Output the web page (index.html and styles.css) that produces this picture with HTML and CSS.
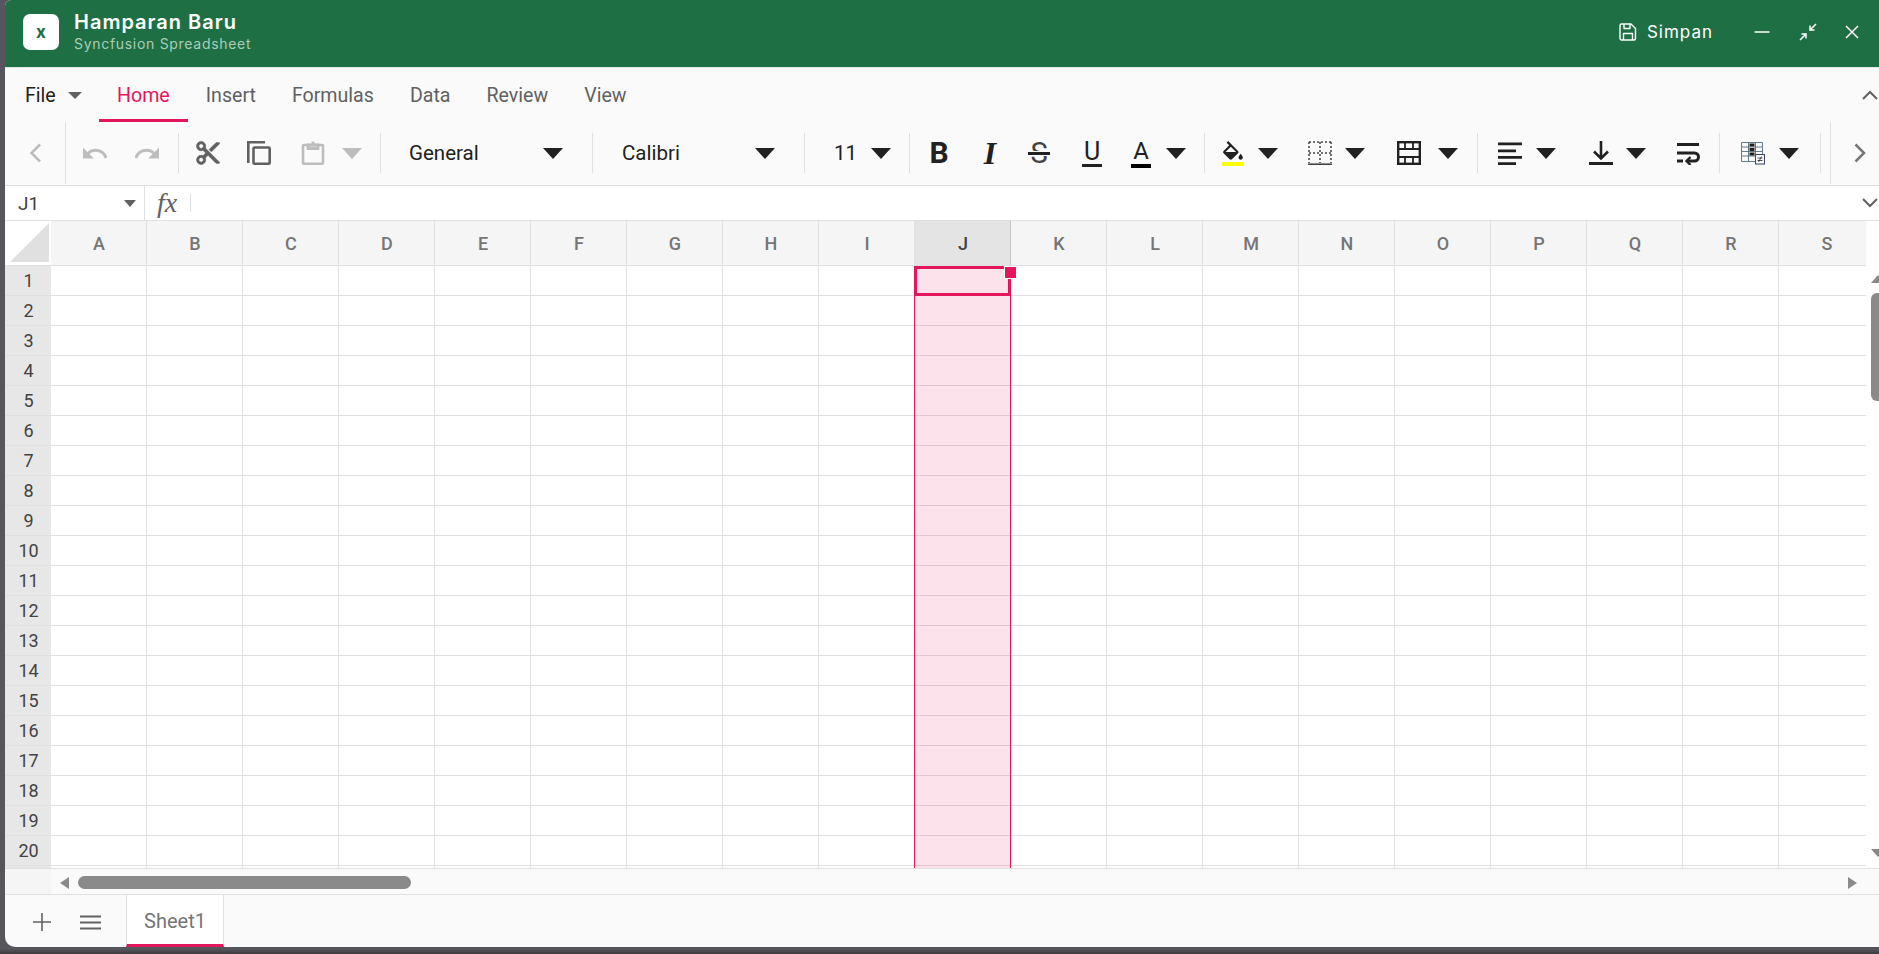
FILE: index.html
```html
<!DOCTYPE html>
<html lang="en">
<head>
    <meta charset="UTF-8">
    <meta name="viewport" content="width=device-width, initial-scale=1.0">
    <title>Hamparan Baru</title>
    <link rel="stylesheet" href="styles.css">
</head>
<body>
    <div class="app">
        <header class="titlebar">
            <div class="logo">x</div>
            <div class="doc-name">
                <div class="doc-title">Hamparan Baru</div>
                <div class="doc-sub">Syncfusion Spreadsheet</div>
            </div>
            <div class="save">
                <svg width="18" height="18" viewBox="0 0 18 18" fill="none" stroke="#fff" stroke-width="1.4" stroke-linejoin="round"><path d="M2.5 1h9.5l4.5 4.5v10a1.5 1.5 0 0 1-1.5 1.5H2.500A1.500 1.500 0 0 1 1 15.500V2.500A1.500 1.500 0 0 1 2.500 1z"/><path d="M5 1v4.500h6V1M4.500 17v-6.500h9V17"/></svg>
                <span>Simpan</span>
            </div>
            <div class="win-btns">
                <svg width="18" height="18" viewBox="0 0 18 18" stroke="#fff" stroke-width="1.500" fill="none"><path d="M1.500 9h15"/></svg>
                <svg width="18" height="18" viewBox="0 0 18 18" stroke="#fff" stroke-width="1.500" fill="none"><path d="M17 1l-6 6M11 2.500V7h4.500M1 17l6-6M2.500 11H7v4.500"/></svg>
                <svg width="14" height="14" viewBox="0 0 14 14" stroke="#fff" stroke-width="1.500" fill="none"><path d="M1 1l12 12M13 1L1 13"/></svg>
            </div>
        </header>

        <nav class="tabs">
            <div class="file-tab">File <i class="caret caret-sm caret-grey"></i></div>
            <div class="tab active">Home</div>
            <div class="tab">Insert</div>
            <div class="tab">Formulas</div>
            <div class="tab">Data</div>
            <div class="tab">Review</div>
            <div class="tab">View</div>
            <svg class="collapse" width="16" height="10" viewBox="0 0 16 10" fill="none" stroke="#616161" stroke-width="2"><path d="M1 9l7-7 7 7"/></svg>
        </nav>

        <div class="toolbar">
            <div class="nav-left">
                <svg width="12" height="20" viewBox="0 0 12 20" fill="none" stroke="#bdbdbd" stroke-width="2.500"><path d="M11 1.500L2.500 10l8.500 8.500"/></svg>
            </div>
            <div class="group g-undo">
                <svg class="ico" viewBox="2 1.500 20 20" fill="#bdbdbd"><path d="M12.500 8c-2.650 0-5.050.99-6.900 2.600L2 7v9h9l-3.620-3.620c1.390-1.160 3.160-1.880 5.120-1.880 3.540 0 6.550 2.310 7.600 5.500l2.370-.78C21.080 11.030 17.150 8 12.500 8z"/></svg>
                <svg class="ico" viewBox="2 1.500 20 20" fill="#bdbdbd"><path d="M18.400 10.600C16.550 8.990 14.150 8 11.500 8c-4.650 0-8.580 3.030-9.960 7.220L3.900 16c1.050-3.190 4.050-5.500 7.600-5.500 1.950 0 3.730.72 5.120 1.880L13 16h9V7l-3.600 3.600z"/></svg>
            </div>
            <div class="group g-clip">
                <svg class="ico" viewBox="1.500 1.500 21 21" fill="#616161" stroke="#616161" stroke-width=".6"><path d="M9.640 7.640c.23-.5.36-1.050.36-1.640 0-2.210-1.790-4-4-4S2 3.790 2 6s1.790 4 4 4c.59 0 1.140-.13 1.640-.36L10 12l-2.360 2.360C7.140 14.130 6.590 14 6 14c-2.210 0-4 1.790-4 4s1.790 4 4 4 4-1.790 4-4c0-.59-.13-1.140-.36-1.640L12 14l7 7h3v-1L9.640 7.640zM6 8c-1.100 0-2-.89-2-2s.9-2 2-2 2 .89 2 2-.9 2-2 2zm0 12c-1.100 0-2-.89-2-2s.9-2 2-2 2 .89 2 2-.9 2-2 2zM19 3l-6 6 2 2 7-7V3h-3z"/></svg>
                <svg class="ico" viewBox="0 0 24 24" fill="none" stroke="#616161" stroke-width="2.600"><path d="M1.300 22V1.300H18"/><rect x="6.500" y="6.500" width="16.200" height="16.200" rx="1"/></svg>
                <svg class="ico" viewBox="0 0 24 24" fill="none" stroke="#bdbdbd" stroke-width="2.600"><rect x="2" y="4" width="20" height="18.700" rx="1"/><path d="M7 4h10v3.500H7zM12 .5v3" stroke-width="2.800"/></svg>
                <i class="caret caret-off"></i>
            </div>
            <div class="group g-general">
                <span class="combo">General</span>
                <i class="caret"></i>
            </div>
            <div class="group g-font">
                <span class="combo">Calibri</span>
                <i class="caret"></i>
            </div>
            <div class="group g-size">
                <span class="combo">11</span>
                <i class="caret"></i>
            </div>
            <div class="group g-style">
                <span class="fmt fmt-b">B</span>
                <span class="fmt fmt-i">I</span>
                <span class="fmt fmt-s">S</span>
                <span class="fmt fmt-u">U</span>
                <span class="fmt fmt-a">A</span>
                <i class="caret"></i>
            </div>
            <div class="group g-color">
                <span class="fill-ico">
                    <svg width="22" height="20" viewBox="2 0 20 18" fill="#212121"><path d="M16.560 8.940L7.620 0 6.210 1.410l2.380 2.380-5.150 5.150c-.59.59-.59 1.540 0 2.120l5.500 5.500c.29.29.68.44 1.060.44s.77-.15 1.060-.44l5.500-5.500c.59-.58.59-1.530 0-2.120zM5.210 10L10 5.210 14.790 10H5.210zM19 11.500s-2 2.170-2 3.500c0 1.100.9 2 2 2s2-.9 2-2c0-1.330-2-3.500-2-3.500z"/></svg>
                </span>
                <i class="caret"></i>
                <svg class="ico" viewBox="0 0 24 24" fill="none" stroke="#424242" stroke-width="1.500"><path d="M1 1h22M1 12h22M1 1v21M23 1v21M12 1v21" stroke-dasharray="2 2"/><path d="M0 23.200h24" stroke-width="1.600"/></svg>
                <i class="caret"></i>
                <svg class="ico" viewBox="0 0 24 24" fill="none" stroke="#212121" stroke-width="2.400"><rect x="1.200" y="1.200" width="21.600" height="21.600"/><path d="M1 8h22M1 16h22M8 1v7M16 1v7M8 16v7M16 16v7" stroke-width="1.800"/></svg>
                <i class="caret"></i>
            </div>
            <div class="group g-align">
                <svg class="ico" viewBox="0 0 24 24" fill="#212121"><path d="M0 1.500h24v2.800H0zM0 8.500h18v2.800H0zM0 15h24v2.800H0zM0 21.200h18V24H0z"/></svg>
                <i class="caret"></i>
                <svg class="ico" viewBox="0 0 24 24" fill="none" stroke="#212121" stroke-width="2.600"><path d="M12 0v17.500M5 10.500l7 7 7-7"/><path d="M0 22.500h24" stroke-width="3"/></svg>
                <i class="caret"></i>
                <svg class="ico" viewBox="0 0 24 24" fill="none" stroke="#212121"><path d="M1 3.500h22" stroke-width="3"/><path d="M1 12h17.500a4 4 0 0 1 0 8H11" stroke-width="3"/><path d="M1 20h6" stroke-width="3"/><path d="M14.500 16l-4 4 4 4" stroke-width="2.400"/></svg>
            </div>
            <div class="group g-cf">
                <svg class="ico" viewBox="0 0 24 24" fill="none">
                    <path d="M.5 1.500h21v19H.5zM.5 6h21M.5 10.500h21M.5 15h21M7.500 1.500v19M14.500 1.500v19" stroke="#546e7a" stroke-width=".9"/>
                    <path d="M8.500 2.500h5v3h-5zM8.500 7h5v3h-5zM8.500 11.500h5v3h-5z" fill="#212121"/>
                    <rect x="14.500" y="13.500" width="9" height="9.500" fill="#fff" stroke="#3f4a6b" stroke-width="1.100"/>
                    <path d="M16.500 17h5M16.500 19.500h5M20.500 15.500l-3 5.500" stroke="#212121" stroke-width=".8"/>
                </svg>
                <i class="caret"></i>
            </div>
            <div class="nav-gap"></div>
            <div class="nav-right">
                <svg width="12" height="20" viewBox="0 0 12 20" fill="none" stroke="#757575" stroke-width="2.500"><path d="M1.500 1.500L10 10l-8.500 8.500"/></svg>
            </div>
        </div>

        <div class="formula-bar">
            <div class="name-box">
                <span>J1</span>
                <i class="caret caret-xs caret-grey"></i>
            </div>
            <div class="fx">fx</div>
            <div class="fx-sep"></div>
            <svg class="fx-expand" width="16" height="10" viewBox="0 0 16 10" fill="none" stroke="#616161" stroke-width="2"><path d="M1 1l7 7 7-7"/></svg>
        </div>

        <div class="sheet-wrap">
            <div class="sheet" id="sheet">
                <div class="col-sel"></div>
                <div class="active-cell"></div>
                <div class="fill-handle"></div>
            </div>
            <div class="vscroll">
                <i class="v-up"></i>
                <div class="v-thumb"></div>
                <i class="v-down"></i>
            </div>
        </div>

        <div class="hscroll">
            <div class="hscroll-corner"></div>
            <i class="h-left"></i>
            <div class="h-thumb"></div>
            <i class="h-right"></i>
        </div>

        <div class="sheet-tabs">
            <svg class="add-sheet" width="18" height="18" viewBox="0 0 18 18" stroke="#616161" stroke-width="1.600"><path d="M9 0v18M0 9h18"/></svg>
            <svg class="list-sheet" width="21" height="15" viewBox="0 0 21 15" stroke="#616161" stroke-width="2"><path d="M0 1.500h21M0 7.500h21M0 13.500h21"/></svg>
            <div class="sheet-tab">Sheet1</div>
        </div>
    </div>

    <script>
        // Build the header row and the grid cells
        const sheet = document.getElementById('sheet');
        const letters = 'ABCDEFGHIJKLMNOPQRS'.split('');
        const parts = ['<div class="corner"><div class="corner-tri"></div></div>'];
        letters.forEach(function (l) {
            parts.push('<div class="col-head' + (l === 'J' ? ' picked' : '') + '">' + l + '</div>');
        });
        for (let r = 1; r <= 21; r++) {
            parts.push('<div class="row-head">' + (r < 21 ? r : '') + '</div>');
            letters.forEach(function () {
                parts.push('<div class="cell"></div>');
            });
        }
        sheet.insertAdjacentHTML('afterbegin', parts.join(''));
    </script>
</body>
</html>
```

FILE: styles.css
```css
* {
    box-sizing: border-box;
}

html, body {
    height: 100%;
}

body {
    margin: 0;
    background: linear-gradient(#56565c 0, #56565c 949px, #3a3a3e 100%);
    overflow: hidden;
    font-family: 'Roboto', sans-serif;
}

.app {
    margin-left: 5px;
    height: 947px;
    display: flex;
    flex-direction: column;
    background: #fafafa;
    border-radius: 6px 0 0 10px;
    overflow: hidden;
}

/* title bar */
.titlebar {
    height: 68px;
    flex-shrink: 0;
    display: flex;
    align-items: center;
    background: #1e6f43;
    border-bottom: 1px solid #e4e4e4;
    padding: 0 20px 4px 18px;
    color: #fff;
}

.logo {
    width: 36px;
    height: 36px;
    border-radius: 7px;
    background: #fff;
    color: #1e6f43;
    font-family: 'Inter', sans-serif;
    font-weight: 700;
    font-size: 17px;
    display: flex;
    justify-content: center;
    align-items: center;
}

.doc-name {
    margin-left: 15px;
    flex: 1;
}

.doc-title {
    font-family: 'Inter', sans-serif;
    font-weight: 600;
    font-size: 20px;
    letter-spacing: 1px;
    line-height: 24px;
}

.doc-sub {
    font-family: 'Inter', sans-serif;
    font-size: 14px;
    letter-spacing: 0.7px;
    line-height: 18px;
    margin-top: 1px;
    color: #a9cdb9;
}

.save {
    display: flex;
    align-items: center;
    gap: 10px;
    font-family: 'Inter', sans-serif;
    font-size: 17px;
    letter-spacing: 1px;
}

.win-btns {
    display: flex;
    align-items: center;
    margin-left: 40px;
    gap: 28px;
}

/* ribbon tabs */
.tabs {
    height: 54px;
    flex-shrink: 0;
    display: flex;
    align-items: stretch;
    font-size: 19.6px;
    color: #616161;
    padding-left: 20px;
    position: relative;
}

.file-tab {
    color: #212121;
    display: flex;
    align-items: center;
    gap: 12px;
    width: 74px;
}

.tab {
    display: flex;
    align-items: center;
    padding: 3px 18px 0;
    border-bottom: 3px solid transparent;
}

.tab.active {
    color: #e3165b;
    border-bottom-color: #e3165b;
}

.collapse {
    margin: 22px 1px 0 auto;
}

.caret {
    display: block;
    width: 0;
    height: 0;
    border-left: 10px solid transparent;
    border-right: 10px solid transparent;
    border-top: 11px solid #212121;
}

.caret-sm {
    border-left-width: 7px;
    border-right-width: 7px;
    border-top-width: 7px;
}

.caret-xs {
    border-left-width: 6px;
    border-right-width: 6px;
    border-top-width: 7px;
}

.caret-grey {
    border-top-color: #616161;
}

.caret-off {
    border-top-color: #bdbdbd;
}

/* toolbar */
.toolbar {
    height: 64px;
    flex-shrink: 0;
    display: flex;
    align-items: center;
    border-bottom: 1px solid #e0e0e0;
    padding-bottom: 1px;
}

.nav-left {
    width: 61px;
    height: 100%;
    border-right: 1px solid #e0e0e0;
    display: flex;
    align-items: center;
    padding-left: 24px;
}

.nav-gap {
    width: 9px;
}

.nav-right {
    flex: 1;
    height: 100%;
    border-left: 1px solid #e0e0e0;
    display: flex;
    align-items: center;
    padding-left: 23px;
}

.group {
    height: 40px;
    display: grid;
    align-items: center;
    justify-items: start;
    border-right: 1px solid #e0e0e0;
}

.g-undo {
    width: 113px;
    padding-left: 17px;
    grid-template-columns: 52px 24px;
}

.g-clip {
    width: 202px;
    padding-left: 17px;
    grid-template-columns: 51px 54px 41px 20px;
}

.g-general {
    width: 212px;
    padding-left: 28px;
    grid-template-columns: 134px 20px;
}

.g-font {
    width: 212px;
    padding-left: 29px;
    grid-template-columns: 133px 20px;
}

.g-size {
    width: 105px;
    padding-left: 29px;
    grid-template-columns: 37px 20px;
}

.g-style {
    width: 295px;
    padding-left: 19px;
    grid-template-columns: 51px 49px 53px 49px 35px 20px;
}

.g-color {
    width: 273px;
    padding-left: 17px;
    grid-template-columns: 36px 50px 37px 52px 41px 20px;
}

.g-align {
    width: 242px;
    padding-left: 20px;
    grid-template-columns: 38px 53px 37px 50px 24px;
}

.g-cf {
    width: 101px;
    padding-left: 21px;
    grid-template-columns: 38px 20px;
}

.ico {
    display: block;
    width: 24px;
    height: 24px;
}

.combo {
    font-size: 20.5px;
    color: #212121;
}

.fmt {
    display: block;
    width: 20px;
    text-align: center;
    font-size: 25px;
    line-height: 28px;
    color: #212121;
}

.fmt-b {
    font-weight: 700;
    font-size: 30px;
}

.fmt-i {
    font-family: 'Liberation Serif', serif;
    font-style: italic;
    font-weight: 700;
    font-size: 32px;
}

.fmt-s {
    position: relative;
    color: #424242;
    font-size: 29px;
}

.fmt-s::after {
    content: "";
    position: absolute;
    left: -1px;
    right: -1px;
    top: 13px;
    height: 3px;
    background: #212121;
    box-shadow: 0 0 0 1px #fafafa;
}

.fmt-u {
    border-bottom: 3px solid #212121;
    line-height: 25px;
}

.fmt-a {
    border-bottom: 4px solid #000;
    line-height: 25px;
    font-size: 24px;
}

.fill-ico {
    display: block;
    width: 22px;
    height: 25px;
    border-bottom: 4px solid #ffff00;
}

.fill-ico svg {
    display: block;
}

/* formula bar */
.formula-bar {
    height: 35px;
    flex-shrink: 0;
    display: flex;
    align-items: center;
    background: #fff;
    border-bottom: 1px solid #e0e0e0;
}

.name-box {
    width: 140px;
    height: 100%;
    border-right: 1px solid #e0e0e0;
    display: flex;
    align-items: center;
    justify-content: space-between;
    padding: 0 8px 0 13px;
    font-size: 19px;
    color: #424242;
}

.fx {
    width: 45px;
    padding-left: 12px;
    font-family: 'Liberation Serif', serif;
    font-style: italic;
    font-size: 28px;
    line-height: 30px;
    color: #616161;
}

.fx-sep {
    width: 1px;
    height: 18px;
    background: #e0e0e0;
}

.fx-expand {
    margin-left: auto;
    margin-right: 1px;
}

/* grid */
.sheet-wrap {
    height: 647px;
    flex-shrink: 0;
    display: flex;
    background: #fff;
}

.sheet {
    width: 1861px;
    flex-shrink: 0;
    height: 100%;
    overflow: hidden;
    position: relative;
    display: grid;
    grid-template-columns: 46px repeat(19, 96px);
    grid-template-rows: 45px repeat(21, 30px);
}

.corner {
    background: #fff;
    border-bottom: 1px solid #e0e0e0;
    padding: 2px 2px 3px 5px;
}

.corner-tri {
    width: 100%;
    height: 100%;
    background: #e0e0e0;
    clip-path: polygon(100% 0, 100% 100%, 0 100%);
}

.col-head {
    background: #f5f5f5;
    border-right: 1px solid #e0e0e0;
    border-bottom: 1px solid #e0e0e0;
    display: flex;
    justify-content: center;
    align-items: center;
    font-size: 18px;
    font-weight: 500;
    color: #757575;
    padding-left: 1px;
}

.col-head.picked {
    background: #e4e4e4;
    color: #424242;
    border-right-color: #c8c8c8;
}

.row-head {
    background: #e7e7e7;
    border-bottom: 1px solid #e0e0e0;
    display: flex;
    justify-content: center;
    align-items: center;
    font-size: 18px;
    color: #424242;
    padding-left: 1px;
}

.cell {
    background: #fff;
    border-right: 1px solid #e0e0e0;
    border-bottom: 1px solid #e0e0e0;
}

.col-sel {
    position: absolute;
    left: 909px;
    top: 45px;
    bottom: 0;
    width: 97px;
    background: rgba(227, 22, 91, 0.12);
    border-left: 1px solid #e3165b;
    border-right: 1px solid #e3165b;
    z-index: 1;
}

.active-cell {
    position: absolute;
    left: 909px;
    top: 45px;
    width: 97px;
    height: 30px;
    border: 3px solid #e3165b;
    z-index: 2;
}

.fill-handle {
    position: absolute;
    left: 1000px;
    top: 46px;
    width: 11px;
    height: 11px;
    background: #e3165b;
    box-shadow: 0 0 0 1px #fff;
    z-index: 3;
}

.vscroll {
    flex: 1;
    overflow: hidden;
    background: #fff;
    padding: 54px 0 0 5px;
    display: flex;
    flex-direction: column;
}

.v-up, .v-down {
    display: block;
    width: 0;
    height: 0;
    border-left: 7px solid transparent;
    border-right: 7px solid transparent;
}

.v-up {
    border-bottom: 8px solid #8a8a8a;
}

.v-down {
    border-top: 8px solid #8a8a8a;
    margin-top: 448px;
}

.v-thumb {
    width: 16px;
    height: 108px;
    margin-top: 10px;
    border-radius: 6px;
    background: #8a8a8a;
    flex-shrink: 0;
}

/* horizontal scroller */
.hscroll {
    height: 27px;
    flex-shrink: 0;
    display: flex;
    align-items: center;
    border-top: 1px solid #e0e0e0;
    border-bottom: 1px solid #e0e0e0;
}

.hscroll-corner {
    width: 46px;
    height: 100%;
    background: #f5f5f5;
}

.h-left, .h-right {
    display: block;
    width: 0;
    height: 0;
    margin-top: 2px;
    border-top: 6px solid transparent;
    border-bottom: 6px solid transparent;
}

.h-left {
    margin-left: 9px;
    border-right: 9px solid #8a8a8a;
}

.h-right {
    margin-left: 1437px;
    border-left: 9px solid #8a8a8a;
}

.h-thumb {
    margin: 2px 0 0 9px;
    width: 333px;
    height: 13px;
    border-radius: 7px;
    background: #8a8a8a;
}

/* sheet tabs */
.sheet-tabs {
    flex: 1;
    min-height: 0;
    display: flex;
    align-items: center;
    padding-left: 28px;
}

.add-sheet, .list-sheet {
    margin-top: 2px;
}

.list-sheet {
    margin-left: 29px;
}

.sheet-tab {
    margin-left: 25px;
    width: 98px;
    height: 100%;
    background: #fff;
    border-left: 1px solid #e0e0e0;
    border-right: 1px solid #e0e0e0;
    border-bottom: 3px solid #e3165b;
    padding-top: 2px;
    display: flex;
    justify-content: center;
    align-items: center;
    font-size: 20px;
    color: #757575;
}
```
